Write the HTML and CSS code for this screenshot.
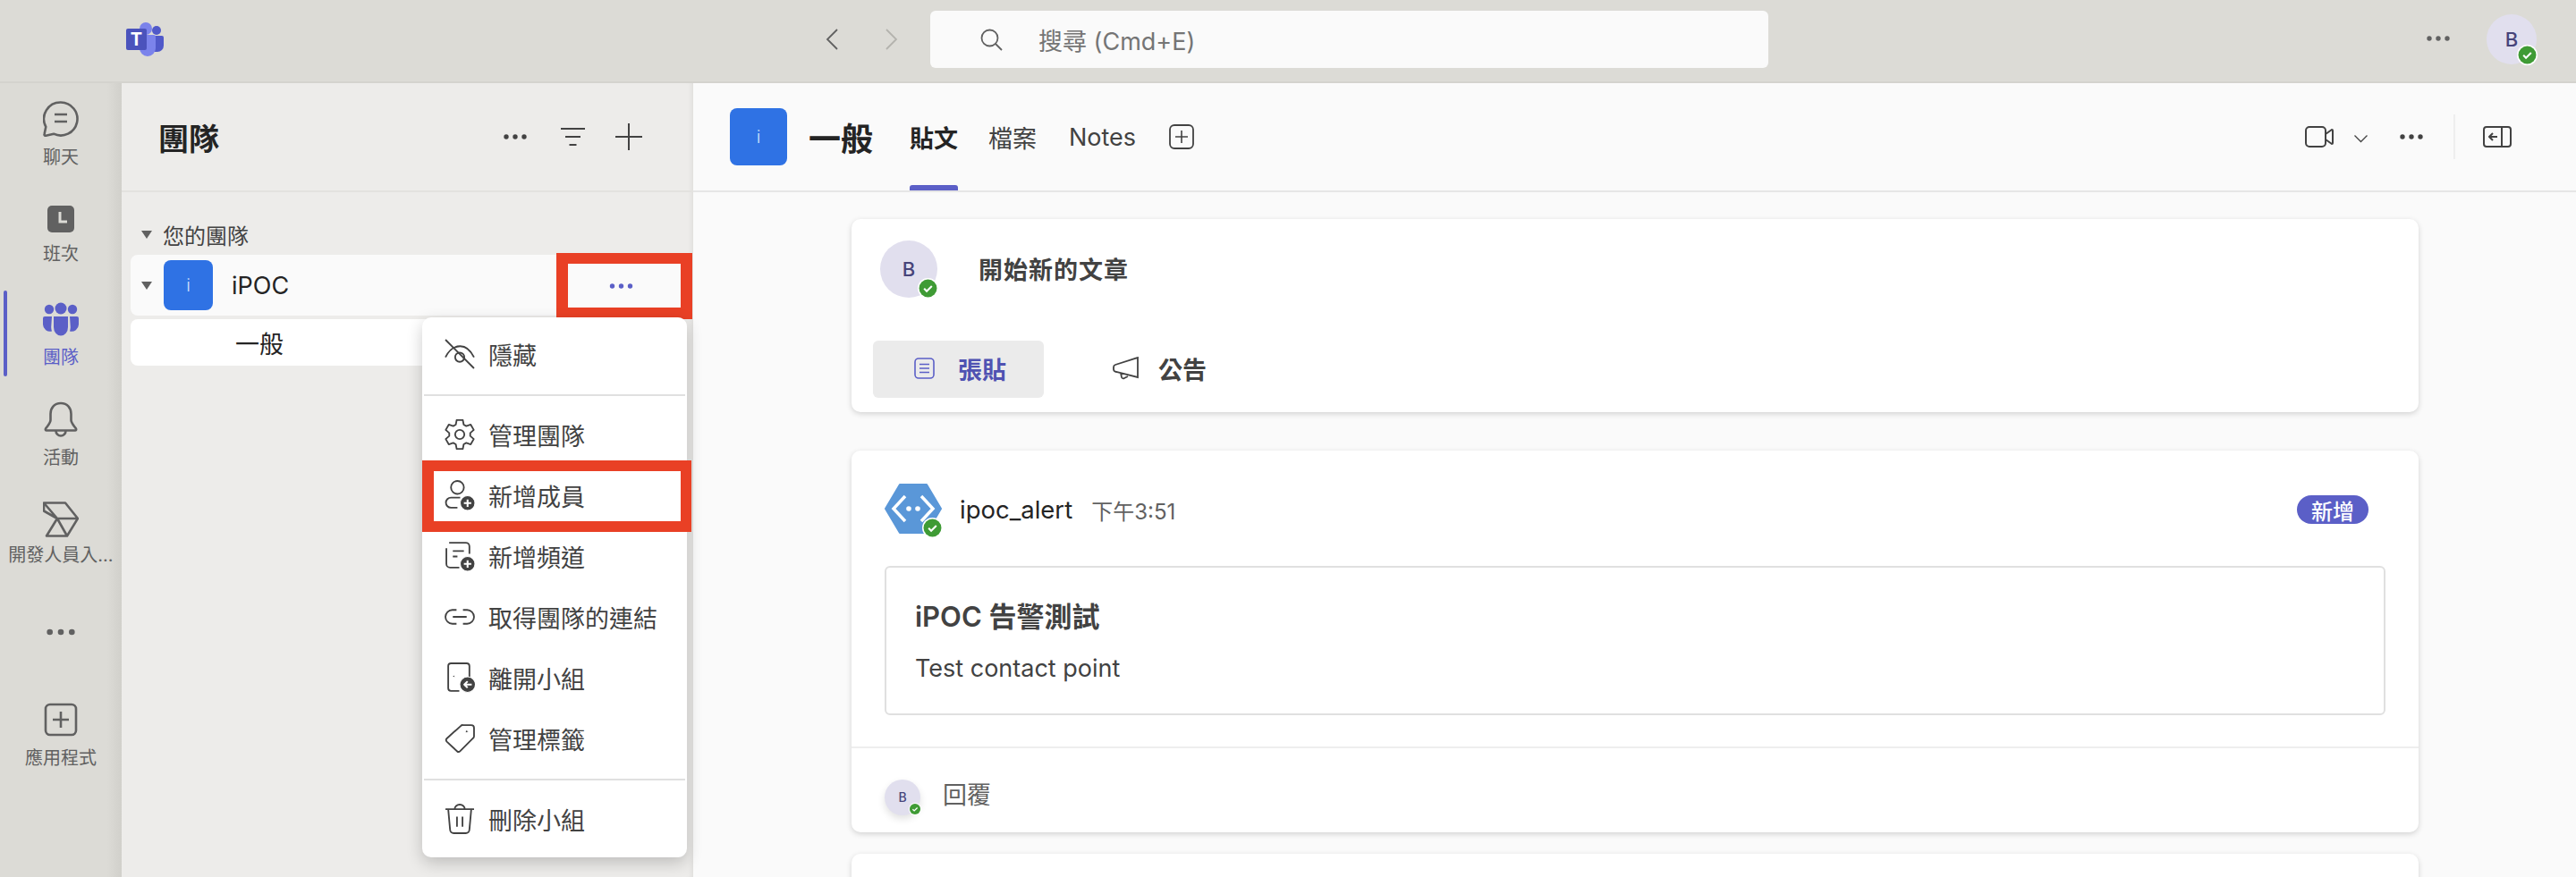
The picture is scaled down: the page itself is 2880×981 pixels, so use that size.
FILE: index.html
```html
<!DOCTYPE html>
<html lang="zh-Hant">
<head>
    <meta charset="UTF-8">
    <meta name="viewport" content="width=device-width, initial-scale=1.0">
    <title>團隊 | iPOC</title>
    <link rel="stylesheet" href="styles.css">
</head>
<body>
    <svg class="defs" width="0" height="0">
        <symbol id="dots" viewBox="0 0 26 6"><circle cx="3" cy="3" r="2.7"/><circle cx="13" cy="3" r="2.7"/><circle cx="23" cy="3" r="2.7"/></symbol>
        <symbol id="ok" viewBox="0 0 24 24"><circle cx="12" cy="12" r="12" fill="#fff"/><circle cx="12" cy="12" r="10.4" fill="#3f9b35"/><path d="M7.5 12.3l3 3 6-6" fill="none" stroke="#fff" stroke-width="2.2"/></symbol>
    </svg>

    <header class="titlebar">
        <svg class="logo" width="42" height="38" viewBox="0 0 42 38">
            <circle cx="34" cy="9" r="5" fill="#5059c9"/>
            <path d="M27 15h13a2 2 0 0 1 2 2v9a7 7 0 0 1-7 7h-8z" fill="#5059c9"/>
            <circle cx="22" cy="7" r="7" fill="#7b83eb"/>
            <path d="M12 14h19a2 2 0 0 1 2 2v13a9 9 0 0 1-18 0z" fill="#7b83eb"/>
            <rect x="0" y="7" width="23" height="24" rx="2" fill="#4b53bc"/>
            <text x="11.5" y="26" text-anchor="middle" class="logo-t">T</text>
        </svg>
        <nav class="history">
            <svg width="14" height="24" viewBox="0 0 14 24"><path d="M13 1L2 12l11 11" fill="none" stroke="#616161" stroke-width="1.8"/></svg>
            <svg width="14" height="24" viewBox="0 0 14 24"><path d="M1 1l11 11L1 23" fill="none" stroke="#b4b3ae" stroke-width="1.8"/></svg>
        </nav>
        <div class="search">
            <svg width="25" height="25" viewBox="0 0 25 25"><circle cx="10.5" cy="10.5" r="9" fill="none" stroke="#616161" stroke-width="1.8"/><path d="M17 17l7 7" stroke="#616161" stroke-width="1.8"/></svg>
            <span>搜尋 (Cmd+E)</span>
        </div>
        <svg class="title-more" width="26" height="6"><use href="#dots"/></svg>
        <div class="avatar avatar-top">B<svg class="status"><use href="#ok"/></svg></div>
    </header>

    <div class="app">
        <aside class="rail">
            <a class="rail-item">
                <svg width="40" height="40" viewBox="0 0 40 40" class="line"><path d="M20 1.5a18.5 18.5 0 1 1-8 35.2l-8.700 2c-1.300.3-2-.4-1.700-1.700l1.700-8.200A18.500 18.500 0 0 1 20 1.500z"/><path d="M13 15h14M13 23h14"/></svg>
                <span>聊天</span>
            </a>
            <a class="rail-item rail-shift">
                <svg width="40" height="40" viewBox="0 0 40 40"><rect x="5" y="5" width="30" height="30" rx="5" fill="#616161"/><path d="M19 12v11h8" fill="none" stroke="#dcdbd6" stroke-width="3"/></svg>
                <span>班次</span>
            </a>
            <a class="rail-item is-active">
                <svg width="40" height="40" viewBox="0 0 40 40" fill="#5b5fc7"><circle cx="20" cy="8" r="6.500"/><circle cx="7" cy="9" r="5.200"/><circle cx="33" cy="9" r="5.200"/><path d="M12 17h16v12a8 9.500 0 0 1-16 0z"/><path d="M10 17H2a2 2 0 0 0-2 2v7a8 8 0 0 0 10 7.500c-.5-1.500-.8-3-.8-4.500z"/><path d="M30 17h8a2 2 0 0 1 2 2v7a8 8 0 0 1-10 7.500c.5-1.500.8-3 .8-4.500z"/></svg>
                <span>團隊</span>
            </a>
            <a class="rail-item">
                <svg width="40" height="40" viewBox="0 0 40 40" class="line"><path d="M20 2c-7.500 0-11.500 5.500-11.500 12v7c0 3-3 6-5.500 9.500-.5 1 0 2 1 2h32c1 0 1.500-1 1-2-2.500-3.500-5.500-6.500-5.500-9.500v-7C31.500 7.500 27.500 2 20 2z"/><path d="M14.500 33a5.500 5.500 0 0 0 11 0"/></svg>
                <span>活動</span>
            </a>
            <a class="rail-item rail-portal">
                <svg width="40" height="40" viewBox="0 0 40 40" class="line"><path d="M1 1.500h24L39 19 27 38.500H4L16 19 1 1.500zM1 1.500v9L16 19M16 19h23M16 19l11 19.500"/></svg>
                <span>開發人員入...</span>
            </a>
            <a class="rail-item rail-more"><svg width="32" height="8" class="rail-dots"><use href="#dots"/></svg></a>
            <a class="rail-item">
                <svg width="40" height="40" viewBox="0 0 40 40" class="line"><rect x="3" y="3" width="34" height="34" rx="5"/><path d="M20 11v18M11 20h18"/></svg>
                <span>應用程式</span>
            </a>
        </aside>

        <section class="panel">
            <div class="panel-head">
                <h1>團隊</h1>
                <svg class="panel-dots" width="26" height="6"><use href="#dots"/></svg>
                <svg width="27" height="20" viewBox="0 0 27 20" class="thin"><path d="M0 1h27M5 10h17M9.500 19h8"/></svg>
                <svg width="30" height="30" viewBox="0 0 30 30" class="thin"><path d="M15 0v30M0 15h30"/></svg>
            </div>
            <div class="panel-body">
                <div class="section-row"><i class="tri"></i>您的團隊</div>
                <div class="team-row">
                    <i class="tri"></i>
                    <div class="team-avatar small">i</div>
                    <span>iPOC</span>
                </div>
                <div class="channel-row">一般</div>
            </div>

            <div class="mark-more"><svg width="27" height="6"><use href="#dots"/></svg></div>

            <div class="menu">
                <div class="menu-item">
                    <svg viewBox="0 0 33 33"><path d="M1 1l31 31M1 20c4-8 10-12 16-12s11 4 15 12"/><circle cx="16.500" cy="20" r="5"/></svg>隱藏
                </div>
                <hr>
                <div class="menu-item">
                    <svg viewBox="0 0 33 33"><path d="M13.170.85h6.660l.97 4.990 2.780 1.600 4.820-1.650 3.300 5.770-3.810 3.340v3.200l3.810 3.340-3.300 5.770-4.820-1.650-2.780 1.600-.97 4.990h-6.660l-.97-4.990-2.780-1.600-4.820 1.650-3.300-5.770 3.810-3.340v-3.200L1.300 11.560l3.300-5.770 4.820 1.650 2.780-1.600z"/><circle cx="16.500" cy="16.500" r="5"/></svg>管理團隊
                </div>
                <div class="menu-item is-marked">
                    <svg viewBox="0 0 33 33"><circle cx="14" cy="8" r="7"/><path d="M17 19H7a5.500 5.500 0 0 0 0 11h7"/><circle class="solid" cx="25" cy="25" r="8"/><path class="mini" d="M25 21v8M21 25h8"/></svg>新增成員
                </div>
                <div class="menu-item">
                    <svg viewBox="0 0 33 33"><path d="M5 2h18a4 4 0 0 1 4 4v8M2 8v17a4 4 0 0 0 4 4h10M9 11h12M9 17h5"/><circle class="solid" cx="25" cy="25" r="8"/><path class="mini" d="M25 21v8M21 25h8"/></svg>新增頻道
                </div>
                <div class="menu-item">
                    <svg viewBox="0 0 33 33"><path d="M13 9H8.500a7.500 7.500 0 0 0 0 15H13M20 9h4.500a7.500 7.500 0 0 1 0 15H20M9 16.500h15"/></svg>取得團隊的連結
                </div>
                <div class="menu-item">
                    <svg viewBox="0 0 33 33"><path d="M16 31H7a3 3 0 0 1-3-3V4a3 3 0 0 1 3-3h17a3 3 0 0 1 3 3v12"/><circle class="solid" cx="25" cy="24" r="8.500"/><path class="mini" d="M29.500 24h-8M25 20.500L21.500 24l3.500 3.500"/><circle class="solid" cx="10" cy="15" r="1.200"/></svg>離開小組
                </div>
                <div class="menu-item">
                    <svg viewBox="0 0 33 33"><path d="M20 2h9a3 3 0 0 1 3 3v9a3 3 0 0 1-1 2.200L17 30.300a2.500 2.500 0 0 1-3.500 0L2.500 20a2.500 2.500 0 0 1 0-3.500L17.500 3A3 3 0 0 1 20 2z"/><circle class="solid" cx="24" cy="9" r="1.500"/></svg>管理標籤
                </div>
                <hr>
                <div class="menu-item">
                    <svg viewBox="0 0 33 33"><path d="M1 6h31M11 6a5.500 5 0 0 1 11 0M4 6l2 22a4 4 0 0 0 4 4h13a4 4 0 0 0 4-4l2-22M13.500 14v11M19.500 14v11"/></svg>刪除小組
                </div>
            </div>
        </section>

        <main class="main">
            <div class="main-head">
                <div class="team-avatar">i</div>
                <h2>一般</h2>
                <a class="tab is-current">貼文</a>
                <a class="tab tab-files">檔案</a>
                <a class="tab">Notes</a>
                <svg class="tab-add" width="28" height="28" viewBox="0 0 28 28"><rect x="1" y="1" width="26" height="26" rx="5" fill="none" stroke="#424242" stroke-width="1.800"/><path d="M14 7v14M7 14h14" stroke="#424242" stroke-width="1.600"/></svg>
                <div class="head-tools">
                    <svg width="32" height="24" viewBox="0 0 32 24" class="tool"><rect x="1" y="1" width="22" height="22" rx="4"/><path d="M23 9l7-5a1 1 0 0 1 1 1v14a1 1 0 0 1-1 1l-7-5"/></svg>
                    <svg class="tool-chev" width="15" height="9" viewBox="0 0 15 9"><path d="M.5.5l7 7 7-7" fill="none" stroke="#424242" stroke-width="1.300"/></svg>
                    <svg class="tool-dots" width="26" height="6"><use href="#dots"/></svg>
                    <i class="tool-sep"></i>
                    <svg width="32" height="24" viewBox="0 0 32 24" class="tool"><rect x="1" y="1" width="30" height="22" rx="3"/><path d="M21 1v22M16 12H7M11 8l-4 4 4 4"/></svg>
                </div>
            </div>

            <div class="feed">
                <article class="card card-new">
                    <div class="compose">
                        <div class="avatar avatar-md">B<svg class="status"><use href="#ok"/></svg></div>
                        <strong>開始新的文章</strong>
                    </div>
                    <div class="compose-btns">
                        <button class="btn is-on">
                            <svg width="23" height="24" viewBox="0 0 23 24" fill="none" stroke="#5b5fc7" stroke-width="1.600"><rect x="1" y="1" width="21" height="22" rx="4"/><path d="M6 7.500h11M6 12h11M6 16.500h11"/></svg>張貼
                        </button>
                        <button class="btn btn-notice">
                            <svg width="30" height="26" viewBox="0 0 30 26" fill="none" stroke="#424242" stroke-width="1.800"><path d="M28 1v22L4 17a3 3 0 0 1-3-3v-2a3 3 0 0 1 2-3zM9 18l1 5a2 2 0 0 0 3 1l4-2"/></svg>公告
                        </button>
                    </div>
                </article>

                <article class="card card-post">
                    <div class="post-head">
                        <div class="bot">
                            <svg width="64" height="56" viewBox="0 0 64 56"><path d="M17 1h30l16 27-16 27H17L1 28z" fill="#5a97d8" stroke="#5a97d8" stroke-width="2" stroke-linejoin="round"/><path d="M23 14L10 28l13 14M41 14l13 14-13 14" fill="none" stroke="#fff" stroke-width="3.500"/><circle cx="27" cy="28" r="2.800" fill="#fff"/><circle cx="37" cy="28" r="2.800" fill="#fff"/></svg>
                            <svg class="status"><use href="#ok"/></svg>
                        </div>
                        <span class="post-name">ipoc_alert</span>
                        <span class="post-time">下午3:51</span>
                        <span class="tag">新增</span>
                    </div>
                    <div class="alert-box">
                        <h3>iPOC 告警測試</h3>
                        <p>Test contact point</p>
                    </div>
                    <div class="reply">
                        <div class="avatar avatar-sm">B<svg class="status"><use href="#ok"/></svg></div>
                        <span>回覆</span>
                    </div>
                </article>

                <article class="card card-next"></article>
            </div>
        </main>
    </div>
</body>
</html>
```

FILE: styles.css
```css
* {
    box-sizing: border-box;
}

body {
    margin: 0;
    height: 981px;
    overflow: hidden;
    font-family: Inter, "Noto Sans CJK TC", sans-serif;
    color: #242424;
    background-color: #dcdbd6;
}

.defs {
    position: absolute;
}

h1, h2, h3, p {
    margin: 0;
}

/* title bar */
.titlebar {
    height: 93px;
    padding-bottom: 3px;
    display: flex;
    align-items: center;
    background-color: #dcdbd6;
    border-bottom: 2px solid #d4d3ce;
}
.logo {
    margin-left: 141px;
    margin-top: -1px;
}
.logo-t {
    font-size: 20px;
    font-weight: 700;
    fill: #fff;
}
.history {
    margin-left: 740px;
    display: flex;
    gap: 53px;
}
.search {
    margin-left: 36px;
    width: 937px;
    height: 64px;
    padding-left: 56px;
    display: flex;
    align-items: center;
    gap: 40px;
    font-size: 27px;
    color: #757575;
    background-color: #fafafa;
    border-radius: 6px;
}
.title-more {
    margin-left: 736px;
    margin-top: -3px;
    fill: #616161;
}

/* avatars */
.avatar {
    position: relative;
    flex: none;
    display: flex;
    align-items: center;
    justify-content: center;
    border-radius: 50%;
    font-weight: 500;
    color: #47447a;
    background-color: #e1dfee;
}
.avatar-top {
    margin-left: 41px;
    width: 56px;
    height: 56px;
    font-size: 22px;
}
.avatar-md {
    width: 64px;
    height: 64px;
    font-size: 22px;
}
.avatar-sm {
    width: 40px;
    height: 40px;
    font-size: 14px;
    box-shadow: 0 4px 8px rgba(0,0,0,0.12);
}
.status {
    position: absolute;
    right: -1px;
    bottom: -1px;
    width: 23px;
    height: 23px;
}
.avatar-sm .status {
    right: -1px;
    bottom: 0;
    width: 14px;
    height: 14px;
}

.app {
    height: 888px;
    display: flex;
}

/* left rail */
.rail {
    width: 136px;
    flex: none;
    padding-top: 8px;
    background: linear-gradient(to right, #dcdbd6 88%, #d1d0cb);
}
.rail-item {
    position: relative;
    height: 112px;
    padding-top: 12px;
    display: flex;
    flex-direction: column;
    align-items: center;
    font-size: 20px;
    line-height: 26px;
    color: #616161;
    white-space: nowrap;
}
.rail-item span {
    margin-top: 10px;
}
.rail-shift span {
    margin-top: 6px;
}
.rail-portal span {
    margin-top: 7px;
}
.rail-item.is-active {
    color: #5b5fc7;
}
.rail-item.is-active::before {
    content: "";
    position: absolute;
    left: 4px;
    top: 0;
    width: 4px;
    height: 96px;
    border-radius: 2px;
    background-color: #5b5fc7;
}
.rail-more {
    padding-top: 42px;
}
.rail-dots {
    fill: #616161;
}
.line {
    fill: none;
    stroke: #616161;
    stroke-width: 2.6;
    stroke-linejoin: round;
}

/* teams panel */
.panel {
    position: relative;
    width: 639px;
    flex: none;
    background-color: #edecea;
    box-shadow: inset -6px 0 6px -5px rgba(0,0,0,0.08);
}
.panel-head {
    height: 122px;
    padding: 0 57px 0 41px;
    display: flex;
    align-items: center;
    border-bottom: 2px solid #e3e2df;
}
.panel-head h1 {
    margin-right: auto;
    font-size: 34px;
    font-weight: 700;
}
.panel-dots {
    fill: #424242;
    margin-right: 38px;
}
.thin {
    fill: none;
    stroke: #424242;
    stroke-width: 2;
    margin-right: 34px;
}
.thin:last-child {
    margin-right: 0;
}
.panel-body {
    padding: 34px 7px 0 10px;
}
.section-row {
    height: 26px;
    padding-left: 12px;
    display: flex;
    align-items: center;
    gap: 12px;
    font-size: 24px;
    color: #424242;
}
.tri {
    width: 0;
    height: 0;
    border-left: 6px solid transparent;
    border-right: 6px solid transparent;
    border-top: 9px solid #616161;
}
.team-row {
    height: 68px;
    margin-top: 10px;
    padding-left: 12px;
    display: flex;
    align-items: center;
    gap: 13px;
    font-size: 27px;
    color: #242424;
    background-color: #fafafa;
    border-radius: 8px;
}
.team-row span {
    margin-left: 8px;
}
.channel-row {
    height: 52px;
    margin-top: 4px;
    padding-left: 117px;
    display: flex;
    align-items: center;
    font-size: 27px;
    background-color: #fff;
    border-radius: 8px;
}
.team-avatar {
    width: 64px;
    height: 64px;
    flex: none;
    display: flex;
    align-items: center;
    justify-content: center;
    font-size: 20px;
    font-weight: 300;
    color: #cfe0fb;
    background-color: #2f72e4;
    border-radius: 8px;
}
.team-avatar.small {
    width: 55px;
    height: 56px;
}

/* red annotation boxes */
.mark-more {
    position: absolute;
    left: 486px;
    top: 190px;
    width: 152px;
    height: 74px;
    padding-right: 7px;
    display: flex;
    align-items: center;
    justify-content: center;
    fill: #5b5fc7;
    background-color: #fafafa;
    border: 12px solid #e94025;
    border-width: 12px 13px 13px;
}

/* context menu */
.menu {
    position: absolute;
    left: 336px;
    top: 262px;
    width: 296px;
    padding: 8px 0;
    background-color: #fff;
    border-radius: 10px;
    box-shadow: 0 6px 18px rgba(0,0,0,0.2);
}
.menu hr {
    height: 2px;
    margin: 10px 2px;
    border: 0;
    background-color: #e0e0e0;
}
.menu-item {
    position: relative;
    height: 68px;
    padding: 0 0 2px 25px;
    display: flex;
    align-items: center;
    gap: 15px;
    font-size: 27px;
    color: #424242;
    white-space: nowrap;
}
.menu-item svg {
    width: 34px;
    height: 34px;
    flex: none;
    fill: none;
    stroke: #424242;
    stroke-width: 1.8;
    stroke-linejoin: round;
}
.menu-item .solid {
    fill: #424242;
    stroke: #fff;
    stroke-width: 1;
}
.menu-item .mini {
    stroke: #fff;
    stroke-width: 2;
}
.menu-item.is-marked::after {
    content: "";
    position: absolute;
    left: 0;
    right: -5px;
    top: -6px;
    bottom: -6px;
    border: 12px solid #e94025;
    border-width: 12px 12px 12px 13px;
}

/* main area */
.main {
    flex: 1;
    min-width: 0;
    overflow: hidden;
    background-color: #fafafa;
}
.main-head {
    height: 122px;
    padding: 0 72px 0 41px;
    display: flex;
    align-items: center;
    border-bottom: 2px solid #e6e6e6;
}
.main-head h2 {
    margin: 0 41px 0 24px;
    font-size: 36px;
    font-weight: 700;
}
.tab {
    position: relative;
    height: 120px;
    margin-right: 34px;
    display: flex;
    align-items: center;
    font-size: 27px;
    color: #424242;
}
.tab-files {
    margin-right: 36px;
}
.tab.is-current {
    font-weight: 700;
    color: #242424;
}
.tab.is-current::after {
    content: "";
    position: absolute;
    left: 0;
    right: 0;
    bottom: 0;
    height: 6px;
    border-radius: 3px 3px 0 0;
    background-color: #5b5fc7;
}
.tab-add {
    margin-left: 3px;
}
.head-tools {
    margin-left: auto;
    display: flex;
    align-items: center;
}
.tool {
    fill: none;
    stroke: #424242;
    stroke-width: 2;
    stroke-linejoin: round;
}
.tool-chev {
    margin-left: 23px;
    margin-top: 4px;
}
.tool-dots {
    margin-left: 36px;
    fill: #424242;
}
.tool-sep {
    width: 2px;
    height: 50px;
    margin: 0 31px 0 34px;
    background-color: #eeeeee;
}

/* feed */
.feed {
    padding: 30px 176px 0 177px;
}
.card {
    background-color: #fff;
    border-radius: 10px;
    box-shadow: 0 2px 6px rgba(0,0,0,0.16);
}
.card-new {
    height: 216px;
    padding: 24px;
}
.compose {
    padding-left: 8px;
    display: flex;
    align-items: center;
    gap: 46px;
}
.compose strong {
    margin-top: -2px;
    font-size: 27px;
    font-weight: 600;
    letter-spacing: 1px;
    color: #424242;
}
.compose-btns {
    margin-top: 48px;
    display: flex;
    gap: 31px;
}
.btn {
    width: 191px;
    height: 64px;
    padding: 0 0 2px 46px;
    display: flex;
    align-items: center;
    gap: 26px;
    font: 700 27px Inter, "Noto Sans CJK TC", sans-serif;
    color: #424242;
    background: none;
    border: 0;
    border-radius: 6px;
}
.btn.is-on {
    color: #4f52b2;
    background-color: #ebebeb;
}
.btn-notice {
    gap: 21px;
}
.card-post {
    height: 427px;
    margin-top: 43px;
    padding-top: 37px;
}
.post-head {
    height: 60px;
    margin: 0 56px 0 37px;
    display: flex;
    align-items: center;
}
.bot {
    position: relative;
    width: 64px;
    height: 60px;
    flex: none;
}
.post-name {
    margin-left: 20px;
    margin-top: -2px;
    font-size: 27.500px;
    color: #242424;
}
.post-time {
    margin-left: 21px;
    margin-top: -2px;
    font-size: 24px;
    color: #616161;
}
.tag {
    margin-left: auto;
    margin-top: -2px;
    width: 80px;
    height: 32px;
    display: flex;
    align-items: center;
    justify-content: center;
    font-size: 24px;
    font-weight: 500;
    color: #fff;
    background-color: #5b5fc7;
    border-radius: 16px;
}
.alert-box {
    height: 167px;
    margin: 32px 37px 0;
    padding: 35px 32px 0;
    border: 2px solid #e0e0e0;
    border-radius: 6px;
}
.alert-box h3 {
    font-size: 31px;
    font-weight: 600;
    line-height: 40px;
    color: #424242;
}
.alert-box p {
    margin-top: 20px;
    font-size: 27px;
    line-height: 36px;
    color: #424242;
}
.reply {
    height: 96px;
    margin-top: 35px;
    padding: 35px 0 0 37px;
    display: flex;
    gap: 25px;
    border-top: 2px solid #eeeeee;
    font-size: 27px;
    line-height: 36px;
    color: #616161;
}
.card-next {
    height: 120px;
    margin-top: 24px;
}
```
